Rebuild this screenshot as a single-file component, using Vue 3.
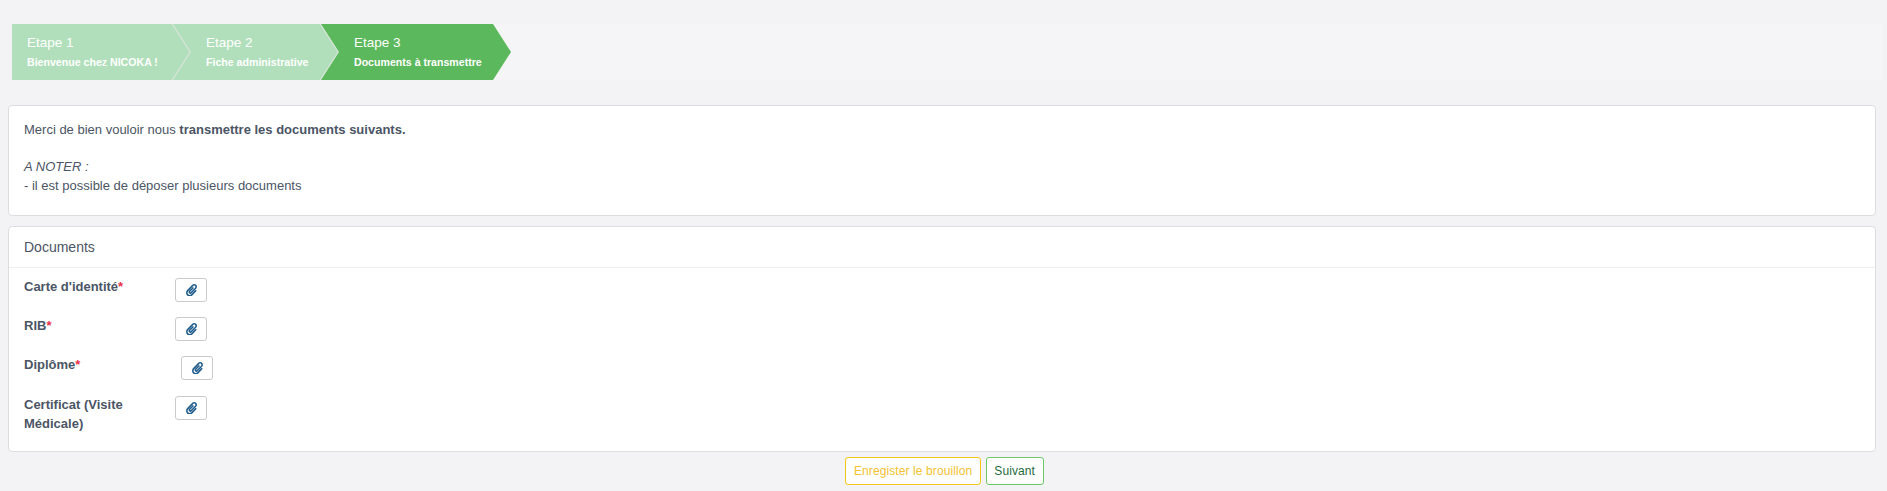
<script setup>
const steps = [
  { title: 'Etape 1', sub: 'Bienvenue chez NICOKA !', state: 'done' },
  { title: 'Etape 2', sub: 'Fiche administrative', state: 'done' },
  { title: 'Etape 3', sub: 'Documents à transmettre', state: 'active' }
]
const docs = [
  { label: "Carte d'identité", required: true },
  { label: 'RIB', required: true },
  { label: 'Diplôme', required: true, shift: true },
  { label: 'Certificat (Visite Médicale)', required: false }
]
const clip = 'M43.246 466.142c-58.43-60.289-57.341-157.511 1.386-217.581L254.392 34c44.316-45.332 116.351-45.336 160.671 0 43.89 44.894 43.943 117.329 0 162.276L232.214 383.128c-29.855 30.537-78.633 30.111-107.982-.998-28.275-29.97-27.368-77.473 1.452-106.953l143.743-146.835c6.182-6.314 16.312-6.422 22.626-.241l22.861 22.379c6.315 6.182 6.422 16.312.241 22.626L171.427 319.927c-4.932 5.045-5.236 13.428-.648 18.292 4.372 4.634 11.245 4.711 15.688.165l182.849-186.851c19.613-20.062 19.613-52.725-.011-72.798-19.189-19.627-49.957-19.637-69.154 0L90.39 293.295c-34.763 35.56-35.299 93.12-1.191 128.313 34.01 35.093 88.985 35.137 123.058.286l172.06-175.999c6.177-6.319 16.307-6.433 22.626-.256l22.877 22.364c6.319 6.177 6.434 16.307.256 22.626l-172.06 175.998c-59.576 60.938-155.943 60.216-214.77-.485z'
</script>

<template>
  <div class="page">
    <div class="wizard">
      <div v-for="s in steps" :key="s.title" class="step" :class="s.state">
        <div class="fill"></div>
        <div class="step-text">
          <div class="step-title">{{ s.title }}</div>
          <div class="step-sub">{{ s.sub }}</div>
        </div>
      </div>
    </div>

    <section class="card intro">
      <p>Merci de bien vouloir nous <strong>transmettre les documents suivants.</strong></p>
      <p class="note"><em>A NOTER :</em><br />- il est possible de déposer plusieurs documents</p>
    </section>

    <section class="card docs">
      <header class="card-head">Documents</header>
      <div class="card-body">
        <div v-for="d in docs" :key="d.label" class="doc-row">
          <div class="doc-label">{{ d.label }}<span v-if="d.required" class="req">*</span></div>
          <button class="attach" :class="{ shift: d.shift }" type="button" aria-label="Joindre">
            <svg viewBox="0 0 448 512" width="11" height="12.5"><path :d="clip" fill="#1f5c8c" /></svg>
          </button>
        </div>
      </div>
    </section>

    <div class="actions">
      <button class="btn draft" type="button">Enregister le brouillon</button>
      <button class="btn next" type="button">Suivant</button>
    </div>
  </div>
</template>

<style>
html, body { background: #f3f3f5; }
</style>

<style scoped>
.page {
  width: 1887px;
  height: 491px;
  box-sizing: border-box;
  padding: 24px 11px 0 8px;
  background: #f3f3f5;
  font-family: "Liberation Sans", Arial, sans-serif;
  color: #4b5565;
  overflow: hidden;
}
.wizard {
  display: flex;
  height: 56px;
  margin: 0 -7px 0 4px;
  background: #f5f5f7;
}
.step {
  position: relative;
  flex: none;
  box-sizing: border-box;
  height: 56px;
  margin-right: -18px;
  color: #fff;
  background: #d5e5d8;
  clip-path: polygon(0 0, calc(100% - 18px) 0, 100% 50%, calc(100% - 18px) 100%, 0 100%);
}
.step:nth-child(1) { width: 179px; z-index: 3; padding-left: 15px; }
.step:nth-child(2) { width: 166px; z-index: 2; padding-left: 33px; }
.step:nth-child(3) { width: 190px; z-index: 1; padding-left: 33px; }
.fill {
  position: absolute;
  inset: 0 1.5px 0 0;
  clip-path: polygon(0 0, calc(100% - 18px) 0, 100% 50%, calc(100% - 18px) 100%, 0 100%);
}
.done .fill { background: #b1dfbb; }
.active { background: #5cb85c; }
.active .fill { background: #5cb85c; }
.step-text { position: relative; }
.step-title { font-size: 13.5px; line-height: 16px; padding-top: 11px; }
.step-sub { font-size: 10.6px; font-weight: 700; line-height: 14px; margin-top: 4px; white-space: nowrap; }

.card {
  background: #fff;
  border: 1px solid #dcdde0;
  border-radius: 4px;
  box-sizing: border-box;
}
.intro {
  height: 111px;
  margin-top: 25px;
  padding: 14px 15px 0;
  font-size: 13px;
  line-height: 19px;
}
.intro p { margin: 0; }
.intro .note { margin-top: 18px; }
.docs { height: 226px; margin-top: 10px; }
.card-head {
  height: 41px;
  box-sizing: border-box;
  padding: 12px 15px 0;
  font-size: 14px;
  line-height: 16px;
  border-bottom: 1px solid #eeeff1;
}
.card-body { padding: 10px 15px 0 15px; }
.doc-row {
  display: flex;
  align-items: flex-start;
  min-height: 39px;
}
.doc-row:last-child { margin-top: 1px; }
.doc-label {
  width: 151px;
  flex: none;
  box-sizing: border-box;
  font-size: 13px;
  font-weight: 700;
  line-height: 19px;
  padding: 0 10px 0 0;
  margin-top: -1px;
}
.req { color: #e8304a; }
.attach {
  width: 32px;
  height: 24px;
  padding: 0;
  display: flex;
  align-items: center;
  justify-content: center;
  background: #fff;
  border: 1px solid #c9cacd;
  border-radius: 3px;
}
.attach.shift { margin-left: 6px; }
.actions {
  display: flex;
  justify-content: center;
  gap: 5px;
  margin-top: 5px;
  padding-left: 5px;
}
.btn {
  height: 28px;
  padding: 0 7.5px;
  background: #fff;
  border-radius: 3px;
  font: 12px "Liberation Sans", Arial, sans-serif;
  letter-spacing: 0.1px;
}
.draft { border: 1px solid #f5c518; color: #f2c230; }
.next { border: 1px solid #6cc765; color: #1f6b3a; }
</style>
